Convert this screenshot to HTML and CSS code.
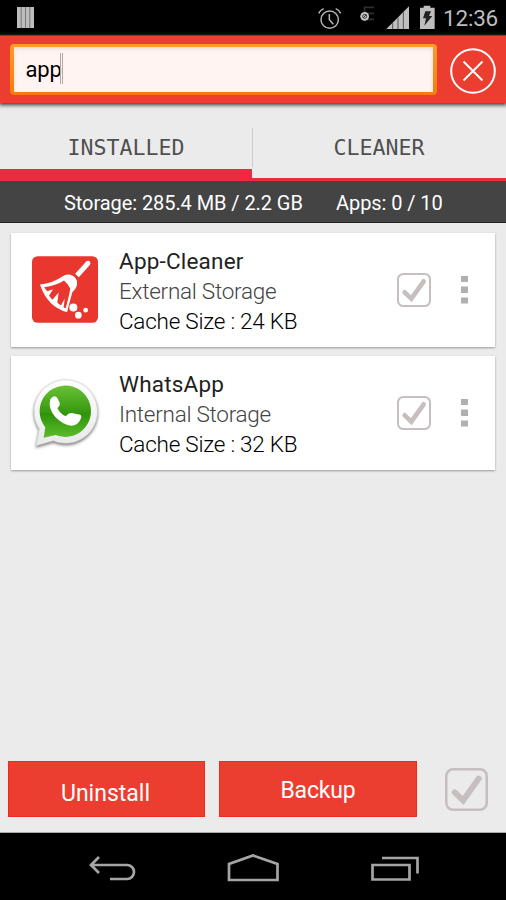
FILE: index.html
```html
<!DOCTYPE html>
<html lang="en">
<head>
<meta charset="utf-8">
<title>App-Cleaner</title>
<link rel="stylesheet" href="styles.css">
</head>
<body>
<svg class="defs" aria-hidden="true">
  <symbol id="check" viewBox="0 0 102 102">
    <rect x="3" y="3" width="96" height="96" rx="16" fill="none" stroke="#c7bfbf" stroke-width="6"/>
    <path d="M23 58 43 77 80 25" fill="none" stroke="#c7bfbf" stroke-width="14" stroke-linecap="round"/>
  </symbol>
  <symbol id="dots" viewBox="0 0 7 28">
    <path d="M0 0h7v6H0zM0 10.500h7v6.500H0zM0 21.500h7v6H0z" fill="#b0b0b0"/>
  </symbol>
</svg>
<div class="status">
  <svg class="bars" viewBox="0 0 17 21"><path fill="#bdbdbd" d="M0 0h17v21H0z"/><path stroke="#777" d="M4.200 0v21M8.500 0v21M12.800 0v21"/></svg>
  <svg class="system" viewBox="0 0 366 105">
    <g fill="none" stroke="#b5b5b5" stroke-width="4.500">
      <circle cx="50" cy="59" r="26"/>
      <path d="M49 42v17l12 14M17 40q4-9 15-14M68 26q11 5 15 14"/>
    </g>
    <path d="M152 22h31M153 40h30M152 58h31M155 22v36" fill="none" stroke="#2e2e2e" stroke-width="5"/>
    <circle cx="155" cy="49" r="13" fill="#c8c8c8"/>
    <circle cx="155" cy="49" r="6" fill="none" stroke="#333" stroke-width="3"/>
    <path d="m150 54 10-10" stroke="#333" stroke-width="3"/>
    <path d="M220 87 288 19v68z" fill="#bebebe"/>
    <path d="M239 68v19M255 52v35M271 36v51" stroke="#555" stroke-width="3"/>
    <path d="M321 23h11v-6h20v6h13v64h-44z" fill="#bebebe"/>
    <path d="M337 34h17l-6 14h10l-24 29 5-22h-9z" fill="#222"/>
  </svg>
  <span class="clock">12:36</span>
</div>
<header class="header">
  <div class="search"><span class="query">app</span><i class="caret"></i></div>
  <svg class="close" viewBox="0 0 46 46" fill="none" stroke="#fff">
    <circle cx="23" cy="23" r="21.800" stroke-width="2"/>
    <path d="m13.500 13.500 19 19m0-19-19 19" stroke-width="2"/>
  </svg>
</header>
<nav class="tabs">
  <div class="tab active"><span>INSTALLED</span></div>
  <div class="tab"><span>CLEANER</span></div>
</nav>
<div class="stats"><span class="storage">Storage: 285.4 MB / 2.2 GB</span><span class="apps">Apps: 0 / 10</span></div>
<main class="list">
  <article class="card">
    <svg class="app-icon broom" viewBox="33 33 198 200">
      <rect x="33" y="33" width="198" height="200" rx="17" fill="#e9372f"/>
      <path d="m168 91 34-38" stroke="#fff" stroke-width="15"/>
      <circle cx="201" cy="54" r="7" fill="#fff"/>
      <path d="M57 118q39-4 67-24 15-10 30-3 17 10 14 29-3 11-14 21-9 33-16 60-59-16-81-83z" fill="#fff"/>
      <path d="M69 126q36-4 60-20 12 9 19 25-7 35-14 58l-6-2 3-27-11 21-11-8 4-31-19 22-10-12 12-20-17 6z" fill="#e9372f"/>
      <path d="M129 104q11 7 19 25l9-4q6-21-7-27-10-4-21 6z" fill="#fff"/>
      <g fill="#fff"><circle cx="157" cy="187" r="12"/><circle cx="172" cy="210" r="10"/><circle cx="194" cy="195" r="7"/></g>
    </svg>
    <div class="info"><span class="name">App-Cleaner</span><span class="place">External Storage</span><span class="size">Cache Size : 24 KB</span></div>
    <svg class="check"><use href="#check"/></svg>
    <svg class="dots"><use href="#dots"/></svg>
  </article>
  <article class="card">
    <svg class="app-icon chat" viewBox="90 81 210 219">
      <defs>
        <linearGradient id="green" x2="0" y2="1"><stop stop-color="#6ac135"/><stop offset=".52" stop-color="#35980f"/><stop offset=".54" stop-color="#2f9209"/><stop offset="1" stop-color="#5dbd2b"/></linearGradient>
        <linearGradient id="shell" x2="0" y2="1"><stop stop-color="#fff"/><stop offset="1" stop-color="#e9e9e9"/></linearGradient>
      </defs>
      <path class="bubble" d="M108 287 118 237A95 95 0 1 1 160 272z" fill="url(#shell)" stroke="#d4d4d4" stroke-width="2"/>
      <path d="M131 263 136 232A77 77 0 1 1 167 255z" fill="url(#green)"/>
      <path d="M151 148q8-12 17-8 5 3 11 19 2 7-7 15 8 17 25 25 10-12 18-10l26 5q5 3 1 13-8 20-29 20-25-3-47-26-23-26-15-53z" fill="#fff"/>
    </svg>
    <div class="info"><span class="name">WhatsApp</span><span class="place">Internal Storage</span><span class="size">Cache Size : 32 KB</span></div>
    <svg class="check"><use href="#check"/></svg>
    <svg class="dots"><use href="#dots"/></svg>
  </article>
</main>
<footer class="actions">
  <button class="btn uninstall">Uninstall</button>
  <button class="btn backup">Backup</button>
  <svg class="check big"><use href="#check"/></svg>
</footer>
<div class="navbar">
  <svg viewBox="0 0 506 67" fill="none" stroke="#a5a5a5" stroke-width="2.700">
    <path d="M110 46h17a7 7 0 0 0 0-14H92M99 24l-8 8 8 8"/>
    <path d="M229 31v16h48.500V31L253 22.500z"/>
    <path d="M372.500 32h37v14.500h-37zM382 25h35.500v15.500"/>
  </svg>
</div>
</body>
</html>
```

FILE: styles.css
```css
* { box-sizing: border-box; }
body {
  margin: 0;
  width: 506px;
  height: 900px;
  display: flex;
  flex-direction: column;
  overflow: hidden;
  background: #ebebeb;
  font-family: Roboto, sans-serif;
}
svg { display: block; flex: none; }
span { white-space: nowrap; }
.defs { position: absolute; width: 0; height: 0; }
.status { height: 35px; flex: none; display: flex; background: #000; }
.bars { width: 17px; height: 21px; margin: 7px 0 0 17px; }
.system { width: 122px; height: 35px; margin-left: 279px; }
.clock { color: #bdbdbd; font-size: 22.500px; line-height: 37px; margin-left: 8px; letter-spacing: -.2px; }
.header {
  position: relative;
  height: 68px;
  flex: none;
  display: flex;
  background: #eb3e30;
  border-top: 1px solid #b5291d;
  box-shadow: 0 1px 4px 1px #333;
}
.search {
  width: 427px;
  height: 51px;
  margin: 8px 0 0 10px;
  padding: 3px 4px;
  display: flex;
  border-radius: 4px;
  background: linear-gradient(#ff9c28, #f77a0b);
}
.query {
  flex: 1;
  background: #fff4f2;
  box-shadow: inset 0 2px 4px #e8dcda;
  padding-left: 11.500px;
  font-size: 22px;
  line-height: 46px;
  letter-spacing: -.2px;
}
.caret { position: absolute; left: 60px; top: 17px; width: 3px; height: 31px; border: solid #b0a9a8; border-width: 0 1px; }
.close { width: 46px; height: 46px; margin: 12px 0 0 13px; }
.tabs { height: 78px; flex: none; display: flex; }
.tab {
  width: 253px;
  padding-top: 26px;
  text-align: center;
  color: #505050;
  font: 21.600px/38px "DejaVu Sans Mono", monospace;
  border-bottom: 3px solid #ec2b40;
}
.tab.active { width: 252px; border-bottom-width: 12px; }
.tab + .tab { width: 254px; background: linear-gradient(#ccc, #ccc) 0 25px / 1px 39px no-repeat; }
.stats { height: 42px; flex: none; display: flex; color: #fff; background: #444; border-bottom: 1px solid #222; font-size: 20px; line-height: 44px; letter-spacing: -.07px; }
.storage { width: 272px; padding-left: 64px; }
.apps { padding-left: 64px; }
.list { flex: 1; padding: 10px 11px 0; display: flex; flex-direction: column; gap: 9px; }
.card { height: 114px; display: flex; background: #fff; box-shadow: 0 1px 2px #999; }
.app-icon { margin-left: 20px; }
.broom { width: 66px; height: 67px; margin: 23px 21.500px 0 20.500px; }
.chat { width: 70px; height: 73px; margin: 21px 19px 0 19px; overflow: visible; }
.bubble { filter: drop-shadow(0 5px 5px #777); }
.info { width: 278px; padding-top: 13px; display: flex; flex-direction: column; font-size: 22.500px; line-height: 30px; color: #222; }
.name { letter-spacing: .2px; }
.place { font-weight: 300; color: #444; letter-spacing: -.26px; }
.size { font-weight: 300; color: #000; letter-spacing: -.24px; }
.check { width: 34px; height: 34px; margin-top: 40px; }
.dots { width: 7px; height: 28px; margin: 43px 0 0 30px; }
.actions { height: 72px; flex: none; display: flex; padding-left: 8px; border-bottom: 1px solid #aaa; }
.btn { width: 197px; height: 56px; margin: 0 14px 0 0; padding: 7px 0 0; border: 1px solid #ed2b1b; border-radius: 0; background: #eb3e30; color: #fff; font: 23px/50px Roboto, sans-serif; }
.uninstall { padding-right: 2px; }
.backup { width: 198px; padding-top: 4px; letter-spacing: -.15px; }
.big { width: 43px; height: 43px; margin: 7px 0 0 14px; }
.navbar { height: 67px; flex: none; background: #000; }
.navbar svg { width: 506px; height: 67px; }
```
